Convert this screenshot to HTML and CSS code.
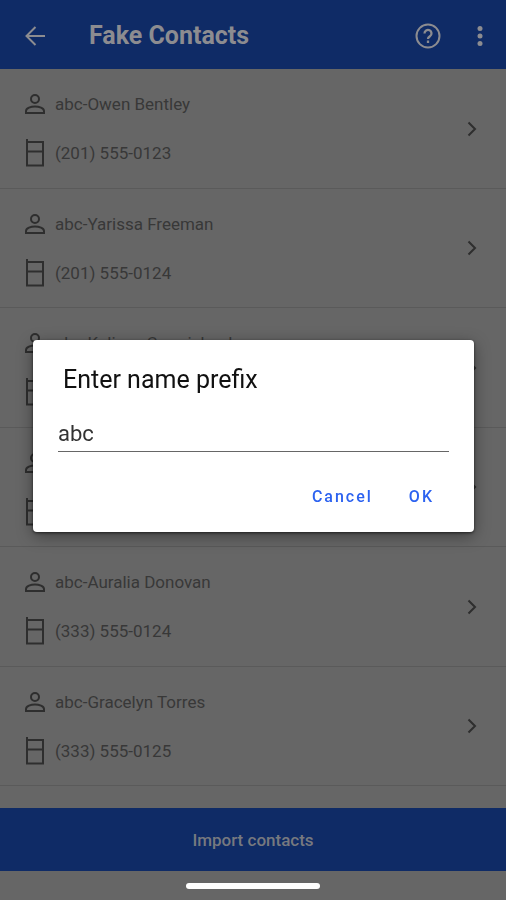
FILE: index.html
```html
<!DOCTYPE html>
<html lang="en">
<head>
<meta charset="utf-8">
<meta name="viewport" content="width=device-width, initial-scale=1">
<title>Fake Contacts</title>
<link rel="stylesheet" href="styles.css">
</head>
<body>
<svg class="symbols" aria-hidden="true">
  <symbol id="person" viewBox="0 0 20 20"><circle cx="10" cy="5" r="4"/><path d="M1 19v-2c0-3 5-4.500 9-4.500s9 1.500 9 4.500v2z"/></symbol>
  <symbol id="phone" viewBox="0 0 20 28"><path d="M2 0v26.500h16V3H2M2 12.500h16"/></symbol>
  <symbol id="chevron" viewBox="0 0 10 16"><path d="M1.500 1.500 8 8l-6.500 6.500"/></symbol>
</svg>
<div class="app">
  <header class="bar">
    <button class="icon-button" aria-label="Back"><svg width="20" height="20" viewBox="0 0 20 20"><path d="M20 10H2M10.500 1 1.500 10l9 9"/></svg></button>
    <h1 class="title">Fake Contacts</h1>
    <button class="icon-button" aria-label="Help"><svg width="26" height="26" viewBox="0 0 26 26"><circle cx="13" cy="13" r="11.500"/><path d="M9.500 10.500a3.500 3.500 0 1 1 5.500 2.800c-1.300.9-2 1.200-2 2.700M13 17.500v2.500" stroke-width="2.300"/></svg></button>
    <button class="icon-button" aria-label="More options"><svg class="dots" width="6" height="20" viewBox="0 0 6 20"><circle cx="3" cy="2.500" r="2.500"/><circle cx="3" cy="10" r="2.500"/><circle cx="3" cy="17.500" r="2.500"/></svg></button>
  </header>
  <main class="content">
    <ul class="contacts">
      <li class="contact"><div class="details"><p class="line"><svg class="person"><use href="#person"/></svg>abc-Owen Bentley</p><p class="line"><svg class="phone"><use href="#phone"/></svg>(201) 555-0123</p></div><svg class="chevron"><use href="#chevron"/></svg></li>
      <li class="contact"><div class="details"><p class="line"><svg class="person"><use href="#person"/></svg>abc-Yarissa Freeman</p><p class="line"><svg class="phone"><use href="#phone"/></svg>(201) 555-0124</p></div><svg class="chevron"><use href="#chevron"/></svg></li>
      <li class="contact"><div class="details"><p class="line"><svg class="person"><use href="#person"/></svg>abc-Kalissa Carmichael</p><p class="line"><svg class="phone"><use href="#phone"/></svg></p></div><svg class="chevron"><use href="#chevron"/></svg></li>
      <li class="contact"><div class="details"><p class="line"><svg class="person"><use href="#person"/></svg></p><p class="line"><svg class="phone"><use href="#phone"/></svg></p></div><svg class="chevron"><use href="#chevron"/></svg></li>
      <li class="contact"><div class="details"><p class="line"><svg class="person"><use href="#person"/></svg>abc-Auralia Donovan</p><p class="line"><svg class="phone"><use href="#phone"/></svg>(333) 555-0124</p></div><svg class="chevron"><use href="#chevron"/></svg></li>
      <li class="contact"><div class="details"><p class="line"><svg class="person"><use href="#person"/></svg>abc-Gracelyn Torres</p><p class="line"><svg class="phone"><use href="#phone"/></svg>(333) 555-0125</p></div><svg class="chevron"><use href="#chevron"/></svg></li>
    </ul>
  </main>
  <button class="import">Import contacts</button>
  <div class="nav"></div>
</div>
<div class="scrim">
  <form class="dialog" role="dialog" aria-labelledby="prefix-label">
    <label class="dialog-title" id="prefix-label" for="prefix">Enter name prefix</label>
    <input class="field" id="prefix" type="text" value="abc">
    <div class="actions">
      <button class="action" type="button">Cancel</button>
      <button class="action" type="button">OK</button>
    </div>
  </form>
</div>
</body>
</html>
```
FILE: styles.css
```css
* { box-sizing: border-box; }
body {
  margin: 0;
  font-family: Roboto, "Liberation Sans", sans-serif;
  background: #666;
  color: #383838;
}
button { border: 0; background: none; padding: 0; font: inherit; color: inherit; }
svg { flex: none; fill: none; stroke: currentColor; stroke-width: 2; }
.symbols { position: absolute; width: 0; height: 0; }
.app { display: flex; flex-direction: column; min-height: 100vh; }
.bar {
  display: flex;
  align-items: center;
  height: 69px;
  padding: 2px 16px 0 15px;
  background: #0f2b66;
  color: #8c8c90;
}
.icon-button { display: flex; align-items: center; justify-content: center; width: 40px; height: 40px; }
.icon-button + .icon-button { width: 20px; margin-left: 22px; }
.title { flex: 1; margin: 0 0 0 34px; font-size: 25px; line-height: 32px; font-weight: 700; }
.dots { fill: currentColor; stroke: none; }
.content { flex: 1; display: flex; flex-direction: column; padding-bottom: 22px; }
.contacts { flex: 1; display: flex; flex-direction: column; margin: 0; padding: 0; list-style: none; }
.contact {
  flex: 1;
  display: flex;
  align-items: center;
  justify-content: space-between;
  padding: 1px 29px 0 25px;
  border-bottom: 1px solid #5a5a5a;
}
.details { display: flex; flex-direction: column; gap: 21px; }
.line { display: flex; align-items: center; gap: 10px; height: 28px; margin: 0; font-size: 17px; line-height: 28px; }
.person { width: 20px; height: 20px; color: #2e2e2e; }
.phone { width: 20px; height: 28px; color: #2e2e2e; }
.chevron { width: 10px; height: 16px; color: #2e2e2e; }
.import { height: 63px; background: #0f2b66; color: #77797f; font-size: 17px; font-weight: 500; }
.nav { display: flex; align-items: center; justify-content: center; height: 29px; }
.nav::after { content: ""; width: 134px; height: 6px; border-radius: 3px; background: #fff; }
.scrim { position: fixed; inset: 0; display: flex; align-items: center; padding: 0 32px 28px 33px; }
.dialog {
  flex: 1;
  display: flex;
  flex-direction: column;
  padding: 24px 25px 16px;
  border-radius: 4px;
  background: #fff;
  box-shadow: 0 4px 16px rgba(0, 0, 0, 0.4), 0 1px 3px rgba(0, 0, 0, 0.6);
}
.dialog-title { padding-left: 5px; font-size: 25px; line-height: 32px; color: #111; }
.field {
  width: 100%;
  height: 36px;
  margin-top: 20px;
  padding: 0;
  border: 0;
  border-bottom: 1px solid #666;
  outline: 0;
  background: none;
  font: 22px/32px Roboto, "Liberation Sans", sans-serif;
  color: #333;
}
.actions { display: flex; justify-content: flex-end; gap: 36px; margin-top: 24px; padding-right: 15px; }
.action { height: 40px; color: #2c62f0; font-size: 16px; font-weight: 500; letter-spacing: 2px; }
```
